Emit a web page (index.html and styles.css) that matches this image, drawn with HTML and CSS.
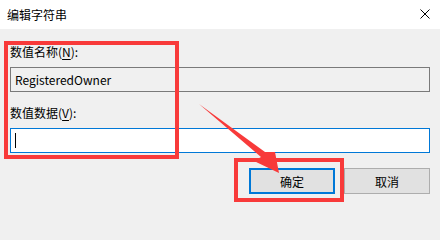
FILE: index.html
```html
<!DOCTYPE html>
<html lang="zh-CN">
<head>
<meta charset="utf-8">
<title>编辑字符串</title>
<link rel="stylesheet" href="styles.css">
</head>
<body>
<div class="dialog">
  <div class="titlebar">
    <span class="title">编辑字符串</span>
    <svg class="close" width="10" height="10" viewBox="0 0 10 10"><path d="M0.5 0.5 L9.5 9.5 M9.5 0.5 L0.5 9.5" stroke="#000" stroke-width="1" fill="none"/></svg>
  </div>
  <div class="content">
    <div class="label">数值名称(<u>N</u>):</div>
    <div class="field readonly">RegisteredOwner</div>
    <div class="label second">数值数据(<u>V</u>):</div>
    <div class="field active"><span class="caret"></span></div>
    <div class="buttons">
      <div class="btn default">确定</div>
      <div class="btn">取消</div>
    </div>
  </div>
  <div class="mark mark-fields"></div>
  <div class="mark mark-ok"></div>
  <svg class="arrow" width="440" height="207" viewBox="0 0 440 207">
    <polygon points="199,104 265,152 275,152 279,173 254,161 261,157" fill="#f83a3a"/>
  </svg>
</div>
</body>
</html>
```
FILE: styles.css
```css
html, body {
  margin: 0;
  padding: 0;
}
body {
  width: 440px;
  height: 207px;
  overflow: hidden;
  background: #f0f0f0;
  font-family: "Noto Sans CJK SC", "Noto Sans", sans-serif;
  font-size: 12px;
  color: #000;
}
.dialog {
  position: relative;
  width: 440px;
  height: 207px;
}
.titlebar {
  height: 29px;
  background: #fff;
  display: flex;
  align-items: center;
  justify-content: space-between;
  padding: 0 10px 0 7px;
}
.title {
  line-height: 16px;
}
.close {
  display: block;
  margin-top: -1px;
}
.content {
  padding: 15px 10px 0 10px;
  display: flex;
  flex-direction: column;
}
.label {
  height: 16px;
  line-height: 16px;
}
.label u {
  text-decoration-thickness: 1px;
  text-underline-offset: 2px;
}
.label.second {
  margin-top: 13px;
}
.field {
  margin-top: 7px;
  height: 25px;
  box-sizing: border-box;
  border: 1px solid #7a7a7a;
  display: flex;
  align-items: center;
  padding-left: 4px;
}
.field.readonly {
  background: #f0f0f0;
}
.field.active {
  background: #fff;
  border-color: #0078d7;
}
.caret {
  display: block;
  width: 1px;
  height: 15px;
  background: #000;
}
.buttons {
  margin-top: 15px;
  display: flex;
  justify-content: flex-end;
  gap: 9px;
}
.btn {
  width: 86px;
  height: 26px;
  box-sizing: border-box;
  border: 1px solid #adadad;
  background: #e1e1e1;
  display: flex;
  align-items: center;
  justify-content: center;
}
.btn.default {
  border: 2px solid #0078d7;
}
.mark {
  position: absolute;
  box-sizing: border-box;
  border: 4px solid #f83a3a;
}
.mark-fields {
  left: 4px;
  top: 41px;
  width: 175px;
  height: 118px;
}
.mark-ok {
  left: 234px;
  top: 158px;
  width: 110px;
  height: 44px;
}
.arrow {
  position: absolute;
  left: 0;
  top: 0;
}
```
